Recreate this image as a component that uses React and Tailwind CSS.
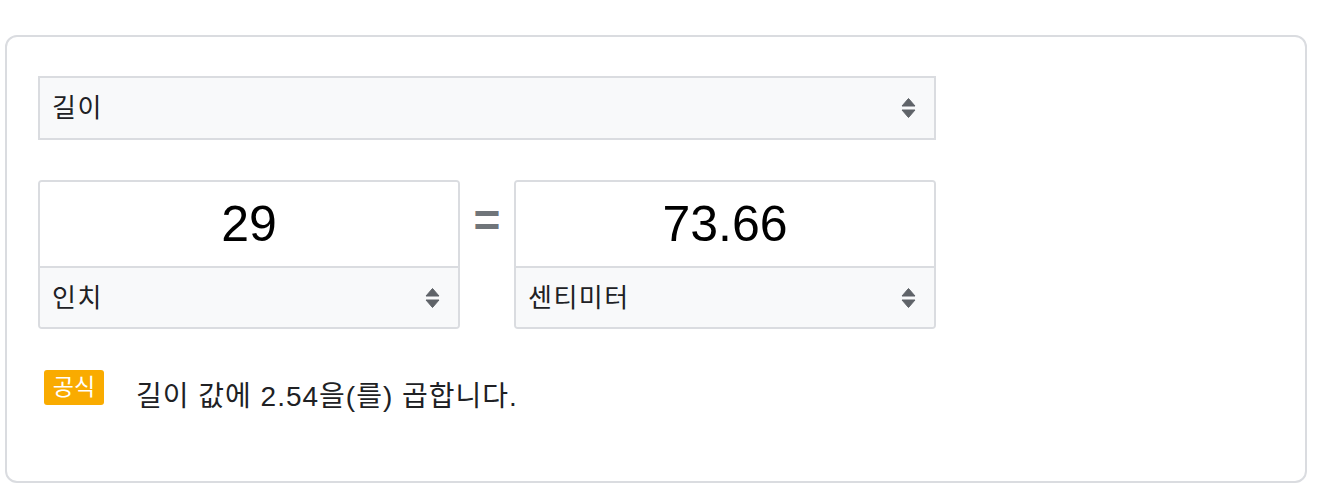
import React from "react";

const FONT = { fontFamily: '"Liberation Sans", Arial, "Noto Sans CJK KR", sans-serif' };

function Arrows() {
  return (
    <svg width="15" height="22" viewBox="0 0 15 22" className="shrink-0">
      <path d="M7.5 1.5 L14 9 L1 9 Z" fill="#5f6368" stroke="#5f6368" strokeWidth="1" strokeLinejoin="round" />
      <path d="M1 13 L14 13 L7.5 20.5 Z" fill="#5f6368" stroke="#5f6368" strokeWidth="1" strokeLinejoin="round" />
    </svg>
  );
}

function UnitBox({ value, unit }) {
  return (
    <div className="w-[422px] h-[149px] border-2 border-[#dadce0] rounded-[4px] flex flex-col overflow-hidden">
      <div className="h-[84px] flex items-center justify-center text-[50px] leading-none text-black bg-white">
        {value}
      </div>
      <div className="flex-1 border-t-2 border-[#dadce0] bg-[#f8f9fa] flex items-center justify-between pl-[12px] pr-[18px]">
        <span className="text-[26px] tracking-[1.5px] leading-[32px] text-[#202124]">{unit}</span>
        <Arrows />
      </div>
    </div>
  );
}

export default function App() {
  return (
    <div className="w-[1320px] h-[498px] bg-white pt-[35px] pl-[5px]" style={FONT}>
      <div className="w-[1302px] h-[448px] border-2 border-[#dadce0] rounded-[12px] pl-[31px] pt-[39px]">
        <div className="w-[898px] h-[64px] border-2 border-[#dadce0] bg-[#f8f9fa] flex items-center justify-between pl-[12px] pr-[18px]">
          <span className="text-[26px] tracking-[1.5px] leading-[32px] text-[#202124]">길이</span>
          <Arrows />
        </div>
        <div className="mt-[40px] flex items-start">
          <UnitBox value="29" unit="인치" />
          <div className="w-[54px] h-[86px] flex items-center justify-center text-[#70757a] text-[46px] font-bold leading-none pb-[6px]">=</div>
          <UnitBox value="73.66" unit="센티미터" />
        </div>
        <div className="mt-[41px] flex items-start pl-[6px]">
          <div className="w-[60px] h-[35px] bg-[#f9ab00] rounded-[3px] flex items-center justify-center text-white text-[23px] leading-none">
            공식
          </div>
          <div className="ml-[32px] mt-[11px] text-[28px] tracking-[1px] leading-[32px] text-[#202124]">
            길이 값에 2.54을(를) 곱합니다.
          </div>
        </div>
      </div>
    </div>
  );
}
